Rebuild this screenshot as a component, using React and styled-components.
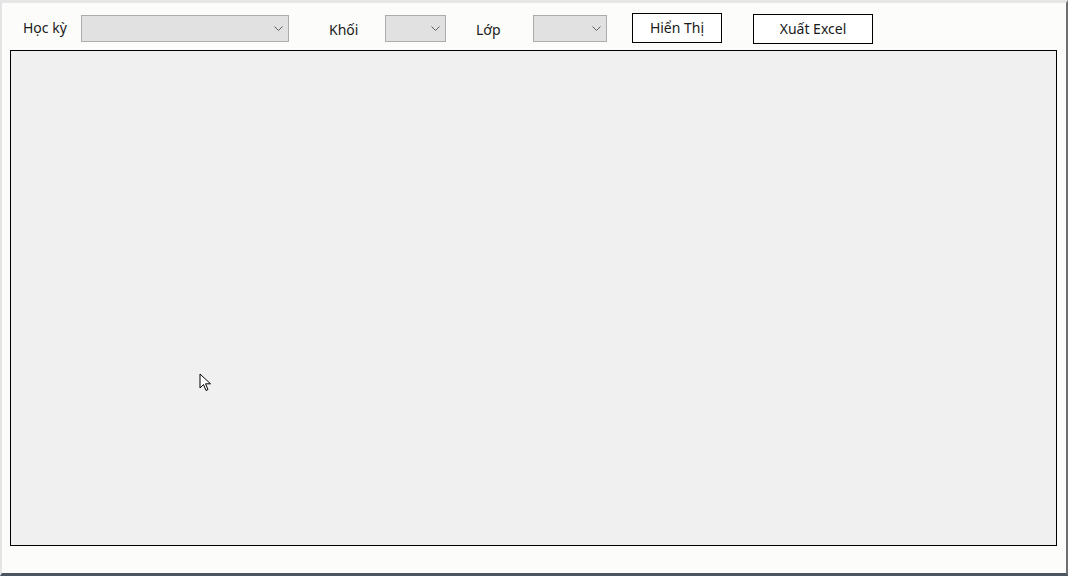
import React from "react";
import styled, { createGlobalStyle } from "styled-components";

const Global = createGlobalStyle`
  html, body { margin: 0; padding: 0; }
  body {
    width: 1068px; height: 576px; overflow: hidden;
    background: #fcfcfa;
    font-family: "Noto Sans", "Open Sans", "DejaVu Sans", sans-serif;
  }
`;

const Frame = styled.div`
  position: relative;
  box-sizing: border-box;
  width: 1068px;
  height: 576px;
  background: #fcfcfa;
  border-top: 3px solid #e6e6e6;
  border-left: 2px solid #e4e4e4;
  border-right: 2px solid #6e6e6e;
  border-bottom: 3px solid #4d5560;
  display: flex;
  flex-direction: column;
`;

const Toolbar = styled.div`
  display: flex;
  align-items: flex-start;
  padding: 10px 0 0 21px;
  height: 44px;
  box-sizing: border-box;
`;

const Label = styled.span`
  font-size: 14px;
  font-weight: 400;
  color: #1a1a1a;
  line-height: 18px;
  width: ${(p) => p.$w}px;
  margin-top: ${(p) => p.$top}px;
  margin-right: ${(p) => p.$gap}px;
  white-space: nowrap;
`;

const Combo = styled.div`
  box-sizing: border-box;
  width: ${(p) => p.$w}px;
  height: 27px;
  margin-top: 2px;
  margin-right: ${(p) => p.$gap}px;
  background: #e1e1e1;
  border: 1px solid #adadad;
  display: flex;
  align-items: center;
  justify-content: flex-end;
  padding-right: 5px;
`;

const Button = styled.div`
  box-sizing: border-box;
  width: ${(p) => p.$w}px;
  height: 30px;
  margin-top: ${(p) => p.$top}px;
  margin-right: ${(p) => p.$gap}px;
  background: #fff;
  border: 1px solid #000;
  display: flex;
  align-items: center;
  justify-content: center;
  font-size: 14px;
  color: #1a1a1a;
  padding-bottom: 1px;
`;

const Grid = styled.div`
  box-sizing: border-box;
  margin: 3px 0 0 8px;
  width: 1047px;
  height: 496px;
  background: #f0f0f0;
  border: 1px solid #000;
`;

const Cursor = styled.svg`
  position: absolute;
  left: 197px;
  top: 370px;
`;

const Chevron = () => (
  <svg width="9" height="5" viewBox="0 0 9 5">
    <path d="M0.5 0.5 L4.5 4.5 L8.5 0.5" fill="none" stroke="#606060" strokeWidth="1" />
  </svg>
);

export default function App() {
  return (
    <>
      <Global />
      <Frame>
        <Toolbar>
          <Label $w={44} $top={6} $gap={14}>Học kỳ</Label>
          <Combo $w={208} $gap={40}><Chevron /></Combo>
          <Label $w={28} $top={8} $gap={28}>Khối</Label>
          <Combo $w={61} $gap={30}><Chevron /></Combo>
          <Label $w={24} $top={8} $gap={33}>Lớp</Label>
          <Combo $w={74} $gap={25}><Chevron /></Combo>
          <Button $w={90} $top={0} $gap={31}>Hiển Thị</Button>
          <Button $w={120} $top={1} $gap={0}>Xuất Excel</Button>
        </Toolbar>
        <Grid />
        <Cursor width="14" height="20" viewBox="0 0 14 20">
          <path d="M1 1 L1 15 L4.5 11.5 L7 17.5 L9 16.5 L6.5 10.8 L11.5 10.8 Z" fill="#fff" stroke="#000" strokeWidth="1" strokeLinejoin="miter" />
        </Cursor>
      </Frame>
    </>
  );
}
